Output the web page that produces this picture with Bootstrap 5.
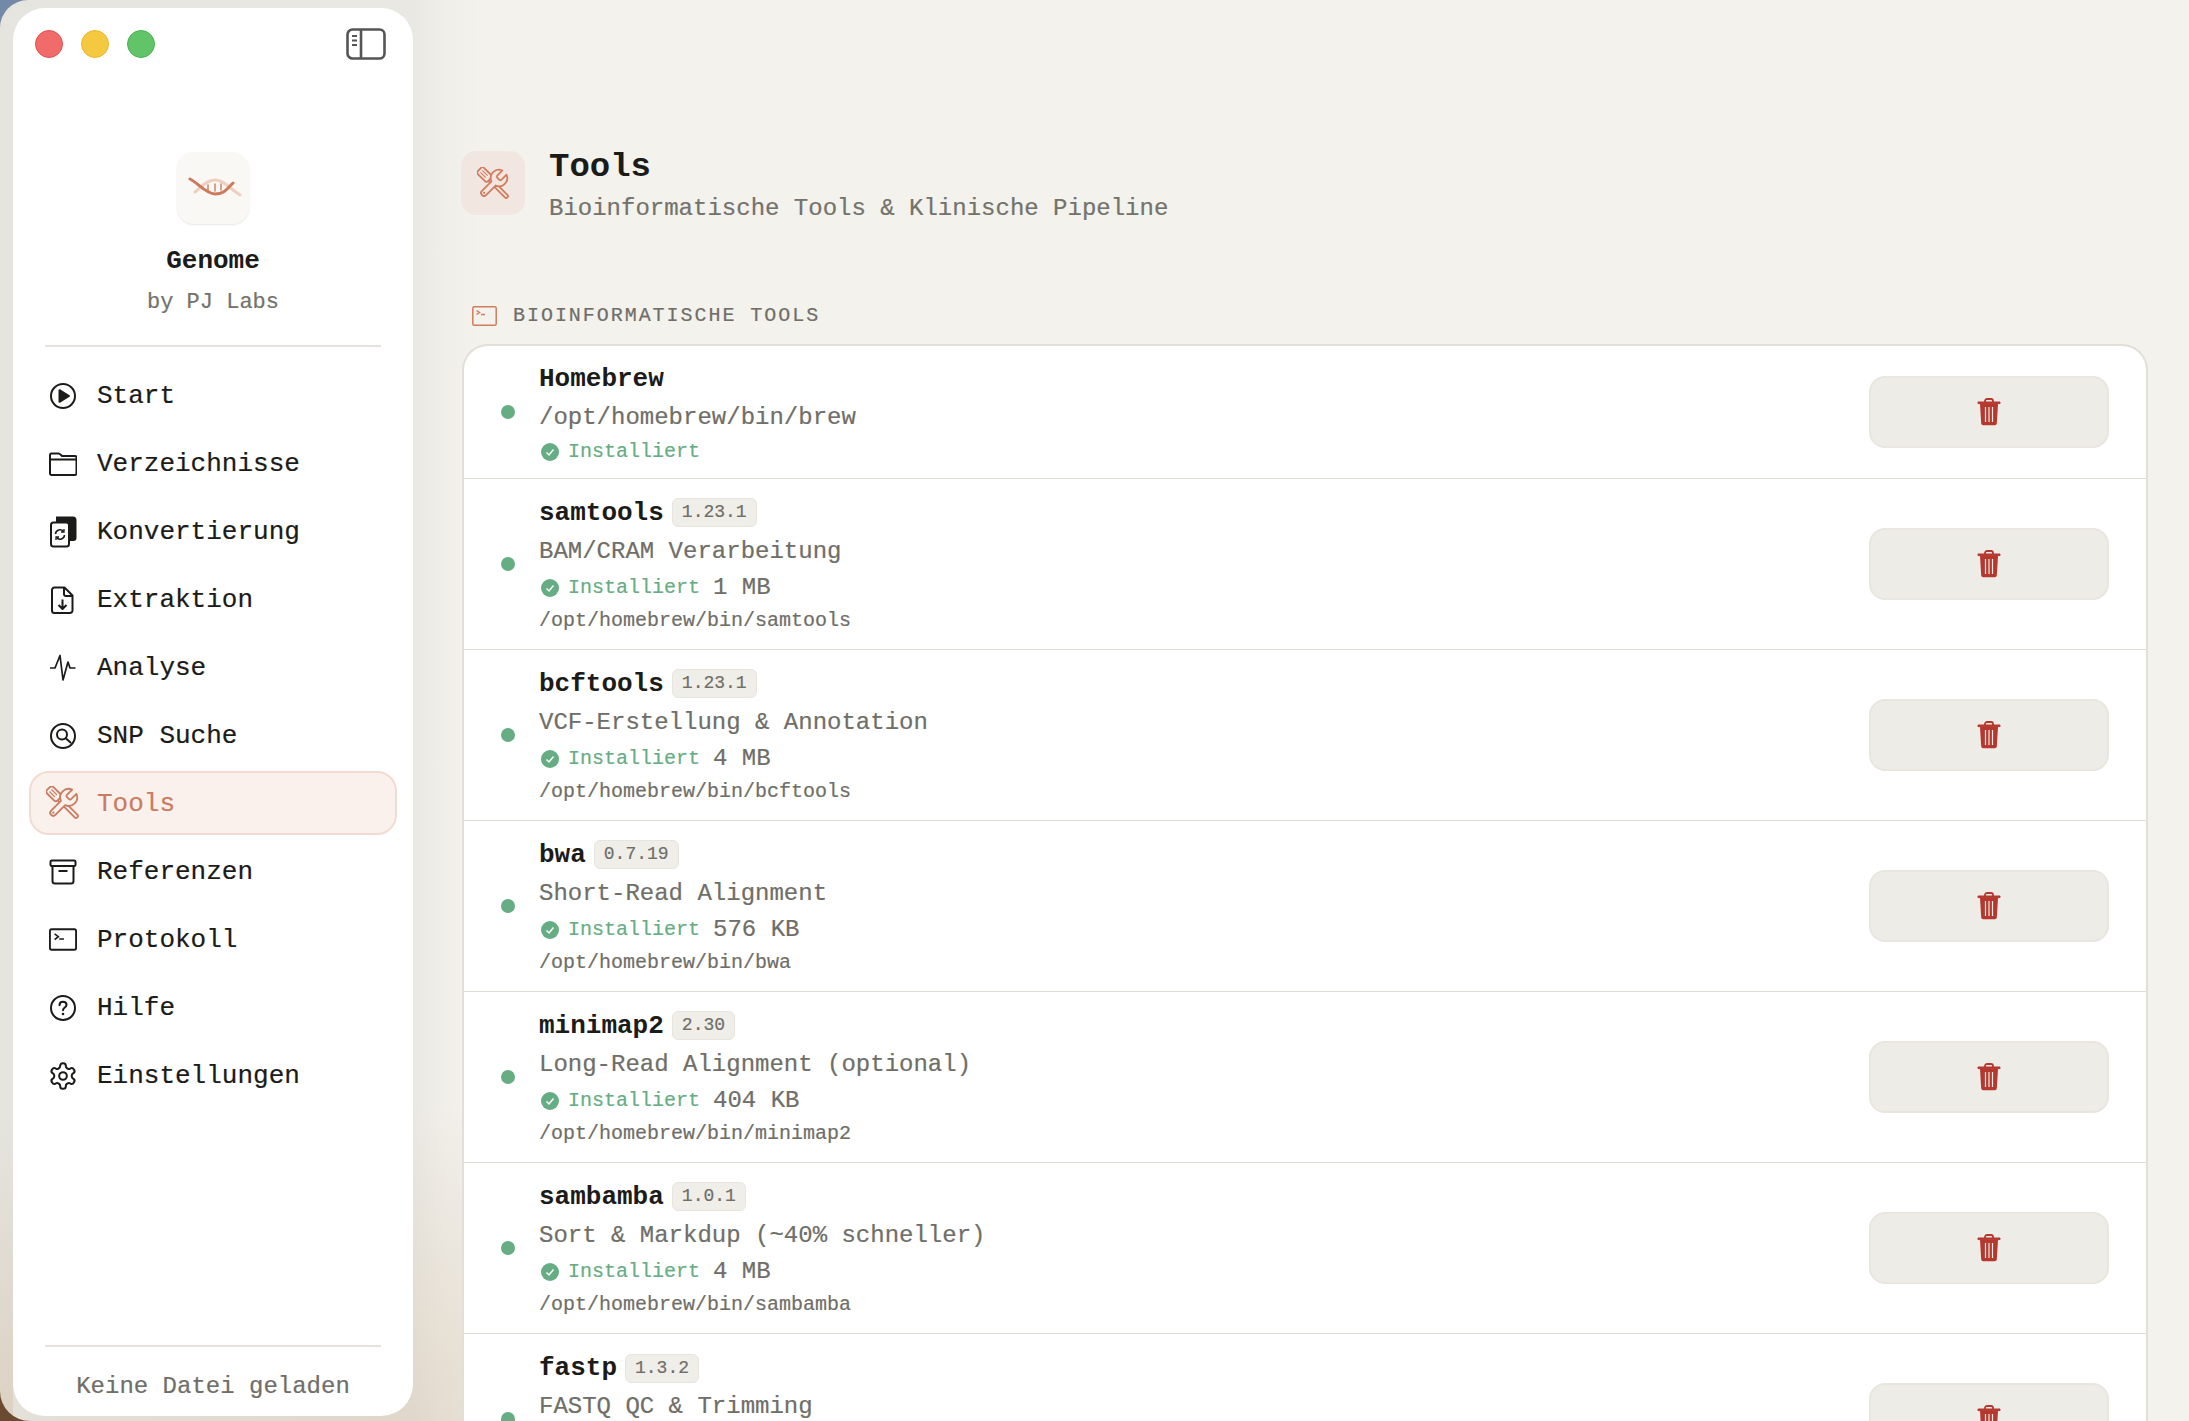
<!DOCTYPE html>
<html lang="de">
<head>
<meta charset="utf-8">
<title>Genome</title>
<link href="https://cdn.jsdelivr.net/npm/bootstrap@5.3.0/dist/css/bootstrap.min.css" rel="stylesheet">
<style>
html,body{height:1421px;overflow:hidden}
body{background:linear-gradient(180deg,#7488a8 0,#8a8f9c 50%,#6a4a30 92%);font-family:"Liberation Mono","DejaVu Sans Mono",monospace;color:#1b1b19;-webkit-text-stroke:.2px}
.win{height:1421px;border-radius:28px 0 0 30px;background:linear-gradient(0deg,rgba(214,198,176,.55),rgba(214,198,176,0) 22%) 0 0/13px 100% no-repeat,radial-gradient(ellipse 480px 320px at 380px 100%,rgba(214,198,176,.5),rgba(214,198,176,0)),linear-gradient(90deg,#e5e4df 0,#e9e8e3 413px,#f0eee9 440px,#f4f2ed 480px);padding:8px 0 5px 13px;overflow:hidden}
.side{width:400px;height:1408px;background:#fff;border-radius:32px;padding:0 16px}
.tlbar{height:72px;padding:0 11px 0 6px}
.lights{gap:18px}
.light{width:28px;height:28px;border-radius:50%;border:1px solid}
.lr{background:#f26b6b;border-color:#e34f4f}
.ly{background:#f4c93f;border-color:#eab82c}
.lg{background:#62c468;border-color:#4cb354}
.logobox{width:72px;height:72px;border-radius:17px;background:#faf8f5;box-shadow:0 1px 2px rgba(60,50,40,.12);margin-top:72px}
.brand{font-size:26px;font-weight:700;line-height:36px;margin-top:19px;-webkit-text-stroke:0}
.byline{font-size:22px;line-height:30px;color:#73726c;margin-top:9px}
.hr1{height:2px;background:#e4e2db;margin:27px 16px 16px}
.navi{height:64px;gap:20px;padding:2px 18px 0;border:2px solid transparent;border-radius:20px;font-size:26px;color:#1b1b19;margin-bottom:4px;text-decoration:none}
.navi svg{flex:none;width:28px;height:28px}
.navi svg.wide{width:34px;height:34px;margin:-2px -3px 0}
.navi svg.tall{height:32px}
.navi.cur{background:#faf1ed;border-color:#f1dbd2;color:#c97c60;--ic:#faf1ed}
.sidefoot{margin:0 16px;border-top:2px solid #e4e2db;padding:20px 0 9px;font-size:24px;line-height:40px;color:#6f6e68;text-align:center}
.mainp{padding:143px 41px 0 48px;min-width:0}
.hicon{width:64px;height:64px;border-radius:15px;background:#f2e7e0;color:#d27c5e;--ic:#f2e7e0}
.h-title{font-size:34px;line-height:40px;font-weight:600;margin-top:-4px;-webkit-text-stroke:0}
.h-sub{font-size:24px;line-height:36px;color:#73726c;margin-top:4px}
.seclabel{font-size:20px;letter-spacing:1.96px;line-height:28px;color:#6f6e68;gap:16px;margin:75px 0 14px 11px}
.toolcard{background:#fff;border:2px solid #e2dfd8;border-radius:26px 26px 0 0;border-bottom:0;margin-left:1px;width:1686px}
.trow{padding:14px 37px;border-bottom:1px solid #dfdcd5;height:171px;gap:16px}
.trow.first{height:133px;padding-top:13px;padding-bottom:13px}
.tblock{margin-top:2px}
.first .tblock{margin-top:4px}
.dot{width:14px;height:14px;border-radius:50%;background:#66ad84;flex:none;margin-right:8px}
.tname{font-size:26px;font-weight:700;line-height:36px;gap:8px;-webkit-text-stroke:0}
.vers{font-size:18px;font-weight:400;line-height:27px;padding:0 9px;background:#f0eee9;border:1px solid #e8e5df;border-radius:6px;color:#6f6e68;-webkit-text-stroke:.2px}
.tdesc{font-size:24px;line-height:36px;color:#6f6e68;margin-top:3px}
.tstat{font-size:24px;line-height:36px;color:#6f6e68;gap:13px;padding-left:1px}
.first .tstat{line-height:31px}
.ok{font-size:20px;color:#66ad84}
.ok svg{width:20px;height:20px}
.tpath{font-size:20px;line-height:30px;color:#6f6e68}
.delbtn,.delbtn:hover{width:240px;height:72px;flex:none;background:#eeece7;border:2px solid #e9e6e0;border-radius:16px;padding:0;color:#b5382f}
.delbtn svg{width:24px;height:28px}
.nobar{display:none}
</style>
</head>
<body>
<svg class="nobar">
  <symbol id="i-tools" viewBox="0 0 24 24">
    <g transform="rotate(-45 12 12)" fill="none" stroke="currentColor" stroke-width="1.300" stroke-linejoin="round">
      <rect x="8.800" y="-2.500" width="6.400" height="10.500" rx="1.800"/>
      <path d="M11 -.5v5.500M13 -.5v5.500" stroke-width=".8"/>
      <path d="M10.700 8v17a1.300 1.300 0 0 0 2.600 0V8"/>
    </g>
    <path d="M14.700 6.300a1 1 0 0 0 0 1.400l1.600 1.600a1 1 0 0 0 1.400 0l3.770-3.770a6 6 0 0 1-7.940 7.940l-6.910 6.910a2.120 2.120 0 0 1-3-3l6.910-6.910a6 6 0 0 1 7.940-7.940l-3.760 3.760z" fill="var(--ic,#fff)" stroke="currentColor" stroke-width="1.300" stroke-linejoin="round"/>
    <circle cx="5.200" cy="18.800" r=".8" fill="currentColor"/>
  </symbol>
  <symbol id="i-check" viewBox="0 0 20 20">
    <circle cx="10" cy="10" r="9" fill="#66ad84"/><path d="M6.500 10.500l2.500 2.500 4.500-5.500" fill="none" stroke="#fff" stroke-width="1.500"/>
  </symbol>
  <symbol id="i-trash" viewBox="0 0 24 28">
    <path d="M8 4V3a2 2 0 0 1 2-2h4a2 2 0 0 1 2 2v1" fill="none" stroke="currentColor" stroke-width="1.800"/>
    <path d="M1 4h22v1.600H1z" fill="currentColor" stroke="currentColor"/>
    <path d="M3 6h18l-1.200 19.500a2 2 0 0 1-2 1.800H6.200a2 2 0 0 1-2-1.800z" fill="currentColor"/>
    <path d="M8.500 9v15M12 9v15M15.500 9v15" stroke="#eeece7" stroke-width="1.200"/>
  </symbol>
</svg>
<div class="win d-flex">
<aside class="side d-flex flex-column flex-shrink-0">
  <div class="tlbar d-flex align-items-center justify-content-between">
    <div class="lights d-flex"><span class="light lr"></span><span class="light ly"></span><span class="light lg"></span></div>
    <svg width="40" height="32" viewBox="0 0 40 32" fill="none" stroke="#555" stroke-width="2.600"><rect x="1.500" y="1.500" width="37" height="29" rx="5"/><path d="M15 2v28"/><path d="M6 8h5M6 12.500h5M6 17h5" stroke-width="2"/></svg>
  </div>
  <div class="d-flex flex-column align-items-center">
    <div class="logobox d-flex align-items-center justify-content-center">
      <svg width="58" height="22" viewBox="0 0 58 22" fill="none" stroke-linecap="round">
        <path d="M11 15C17 10 23 3 31 3S44 10 56 18" stroke="#efcfbe" stroke-width="3"/>
        <path d="M6 2C14 6 22 17 31 17S43 12 49 6" stroke="#cb7b5c" stroke-width="3"/>
        <path d="M24 8v6M31 7v7M37 7v6" stroke="#cb7b5c" stroke-width="1.400"/>
      </svg>
    </div>
    <div class="brand">Genome</div>
    <div class="byline">by PJ Labs</div>
  </div>
  <div class="hr1"></div>
  <nav class="d-flex flex-column flex-grow-1">
    <a class="navi d-flex align-items-center" href="#"><svg viewBox="0 0 28 28" fill="none" stroke="currentColor" stroke-width="2"><circle cx="14" cy="14" r="12"/><path d="M10.500 8.200v11.600L20 14z" fill="currentColor" stroke-linejoin="round"/></svg>Start</a>
    <a class="navi d-flex align-items-center" href="#"><svg viewBox="0 0 28 28" fill="none" stroke="currentColor" stroke-width="2"><path d="M1 7.500V5a1.500 1.500 0 0 1 1.500-1.500h7c1 0 1.500.5 2.500 1.500l1 1H26a1.500 1.500 0 0 1 1.500 1.500v16A1.500 1.500 0 0 1 26 25H2.500A1.500 1.500 0 0 1 1 23.500zM1 9.500h26.500"/></svg>Verzeichnisse</a>
    <a class="navi d-flex align-items-center" href="#"><svg class="tall" viewBox="0 0 28 32" fill="none" stroke="currentColor" stroke-width="2"><path d="M8 1.500h16a2.500 2.500 0 0 1 2.500 2.500v18a2 2 0 0 1-2 2H21V8.500a3 3 0 0 0-3-3H8z" fill="currentColor"/><rect x="2" y="6.500" width="18" height="24" rx="2.500" fill="#fff"/><path d="M6.500 18a4.500 4.500 0 0 1 8-2.500M15.500 19a4.500 4.500 0 0 1-8 2.500" stroke-width="1.600"/><path d="M15 13v3h-3M7 24v-3h3" stroke-width="1.300"/></svg>Konvertierung</a>
    <a class="navi d-flex align-items-center" href="#"><svg viewBox="0 0 28 28" fill="none" stroke="currentColor" stroke-width="2" stroke-linejoin="round"><path d="M5.500 1.500h10l8 8v15a2.500 2.500 0 0 1-2.500 2.500H5.500A2.500 2.500 0 0 1 3 24.500V4a2.500 2.500 0 0 1 2.500-2.500zM15 1.500V8a2 2 0 0 0 2 2h6.500M13.500 13.500V23M9.500 19l4 4 4-4"/></svg>Extraktion</a>
    <a class="navi d-flex align-items-center" href="#"><svg viewBox="0 0 28 28" fill="none" stroke="currentColor" stroke-width="1.700" stroke-linejoin="round"><path d="M1 14h5L11 1.500 14 26l5-18 2 6h5.500"/></svg>Analyse</a>
    <a class="navi d-flex align-items-center" href="#"><svg viewBox="0 0 28 28" fill="none" stroke="currentColor" stroke-width="2"><circle cx="14" cy="14" r="12"/><circle cx="13" cy="12.500" r="5"/><path d="M17 16.500l4.500 4" stroke-linecap="round"/></svg>SNP Suche</a>
    <a class="navi cur d-flex align-items-center" href="#"><svg class="wide"><use href="#i-tools"/></svg>Tools</a>
    <a class="navi d-flex align-items-center" href="#"><svg viewBox="0 0 28 28" fill="none" stroke="currentColor" stroke-width="2"><rect x="1.500" y="2.500" width="25" height="5.500" rx="1.200"/><path d="M3.500 8v15a2.500 2.500 0 0 0 2.500 2.500h16a2.500 2.500 0 0 0 2.500-2.500V8M9.500 13h9"/></svg>Referenzen</a>
    <a class="navi d-flex align-items-center" href="#"><svg viewBox="0 0 30 28" fill="none" stroke="currentColor" stroke-width="2"><rect x="1" y="2.500" width="28" height="22" rx="1.800"/><path d="M6 7.500l4 3-4 3M11 13h5" stroke-width="1.700"/></svg>Protokoll</a>
    <a class="navi d-flex align-items-center" href="#"><svg viewBox="0 0 28 28" fill="none" stroke="currentColor" stroke-width="2"><circle cx="14" cy="14" r="12"/><path d="M10.500 11.200c0-2 1.500-3.400 3.500-3.400s3.500 1.300 3.500 3.100c0 2.600-3.500 2.700-3.500 5.400" stroke-linecap="round"/><circle cx="14" cy="20" r="1.300" fill="currentColor" stroke="none"/></svg>Hilfe</a>
    <a class="navi d-flex align-items-center" href="#"><svg viewBox="1 1 22 22" fill="none" stroke="currentColor" stroke-width="1.600" stroke-linejoin="round"><path d="M12.220 2h-.44a2 2 0 0 0-2 2v.18a2 2 0 0 1-1 1.730l-.43.25a2 2 0 0 1-2 0l-.15-.08a2 2 0 0 0-2.730.73l-.22.38a2 2 0 0 0 .73 2.730l.15.1a2 2 0 0 1 1 1.720v.51a2 2 0 0 1-1 1.740l-.15.09a2 2 0 0 0-.73 2.730l.22.38a2 2 0 0 0 2.730.73l.15-.08a2 2 0 0 1 2 0l.43.25a2 2 0 0 1 1 1.730V20a2 2 0 0 0 2 2h.44a2 2 0 0 0 2-2v-.18a2 2 0 0 1 1-1.730l.43-.25a2 2 0 0 1 2 0l.15.08a2 2 0 0 0 2.730-.73l.22-.39a2 2 0 0 0-.73-2.730l-.15-.08a2 2 0 0 1-1-1.740v-.5a2 2 0 0 1 1-1.740l.15-.09a2 2 0 0 0 .73-2.730l-.22-.38a2 2 0 0 0-2.730-.73l-.15.08a2 2 0 0 1-2 0l-.43-.25a2 2 0 0 1-1-1.730V4a2 2 0 0 0-2-2z"/><circle cx="12" cy="12" r="3"/></svg>Einstellungen</a>
  </nav>
  <div class="sidefoot">Keine Datei geladen</div>
</aside>
<main class="mainp flex-grow-1">
  <header class="d-flex gap-4">
    <div class="hicon d-flex align-items-center justify-content-center flex-shrink-0"><svg width="33" height="33"><use href="#i-tools"/></svg></div>
    <div>
      <div class="h-title">Tools</div>
      <div class="h-sub">Bioinformatische Tools &amp; Klinische Pipeline</div>
    </div>
  </header>
  <div class="seclabel d-flex align-items-center"><svg width="25" height="20" viewBox="0 0 25 20" fill="none" stroke="#d27c5e" stroke-width="1.500"><rect x=".8" y=".8" width="23.400" height="18.400" rx="1.500"/><path d="M4.500 4.500l3 2-3 2M9 8.500h4"/></svg>BIOINFORMATISCHE TOOLS</div>
  <section class="toolcard">
    <div class="trow first d-flex align-items-center">
      <span class="dot"></span>
      <div class="tblock flex-grow-1">
        <div class="tname d-flex align-items-center">Homebrew</div>
        <div class="tdesc">/opt/homebrew/bin/brew</div>
        <div class="tstat d-flex align-items-center"><span class="ok d-flex align-items-center gap-2"><svg><use href="#i-check"/></svg>Installiert</span></div>
      </div>
      <button class="btn delbtn d-flex align-items-center justify-content-center" aria-label="Löschen"><svg><use href="#i-trash"/></svg></button>
    </div>
    <div class="trow d-flex align-items-center">
      <span class="dot"></span>
      <div class="tblock flex-grow-1">
        <div class="tname d-flex align-items-center">samtools<span class="vers">1.23.1</span></div>
        <div class="tdesc">BAM/CRAM Verarbeitung</div>
        <div class="tstat d-flex align-items-center"><span class="ok d-flex align-items-center gap-2"><svg><use href="#i-check"/></svg>Installiert</span>1 MB</div>
        <div class="tpath">/opt/homebrew/bin/samtools</div>
      </div>
      <button class="btn delbtn d-flex align-items-center justify-content-center" aria-label="Löschen"><svg><use href="#i-trash"/></svg></button>
    </div>
    <div class="trow d-flex align-items-center">
      <span class="dot"></span>
      <div class="tblock flex-grow-1">
        <div class="tname d-flex align-items-center">bcftools<span class="vers">1.23.1</span></div>
        <div class="tdesc">VCF-Erstellung &amp; Annotation</div>
        <div class="tstat d-flex align-items-center"><span class="ok d-flex align-items-center gap-2"><svg><use href="#i-check"/></svg>Installiert</span>4 MB</div>
        <div class="tpath">/opt/homebrew/bin/bcftools</div>
      </div>
      <button class="btn delbtn d-flex align-items-center justify-content-center" aria-label="Löschen"><svg><use href="#i-trash"/></svg></button>
    </div>
    <div class="trow d-flex align-items-center">
      <span class="dot"></span>
      <div class="tblock flex-grow-1">
        <div class="tname d-flex align-items-center">bwa<span class="vers">0.7.19</span></div>
        <div class="tdesc">Short-Read Alignment</div>
        <div class="tstat d-flex align-items-center"><span class="ok d-flex align-items-center gap-2"><svg><use href="#i-check"/></svg>Installiert</span>576 KB</div>
        <div class="tpath">/opt/homebrew/bin/bwa</div>
      </div>
      <button class="btn delbtn d-flex align-items-center justify-content-center" aria-label="Löschen"><svg><use href="#i-trash"/></svg></button>
    </div>
    <div class="trow d-flex align-items-center">
      <span class="dot"></span>
      <div class="tblock flex-grow-1">
        <div class="tname d-flex align-items-center">minimap2<span class="vers">2.30</span></div>
        <div class="tdesc">Long-Read Alignment (optional)</div>
        <div class="tstat d-flex align-items-center"><span class="ok d-flex align-items-center gap-2"><svg><use href="#i-check"/></svg>Installiert</span>404 KB</div>
        <div class="tpath">/opt/homebrew/bin/minimap2</div>
      </div>
      <button class="btn delbtn d-flex align-items-center justify-content-center" aria-label="Löschen"><svg><use href="#i-trash"/></svg></button>
    </div>
    <div class="trow d-flex align-items-center">
      <span class="dot"></span>
      <div class="tblock flex-grow-1">
        <div class="tname d-flex align-items-center">sambamba<span class="vers">1.0.1</span></div>
        <div class="tdesc">Sort &amp; Markdup (~40% schneller)</div>
        <div class="tstat d-flex align-items-center"><span class="ok d-flex align-items-center gap-2"><svg><use href="#i-check"/></svg>Installiert</span>4 MB</div>
        <div class="tpath">/opt/homebrew/bin/sambamba</div>
      </div>
      <button class="btn delbtn d-flex align-items-center justify-content-center" aria-label="Löschen"><svg><use href="#i-trash"/></svg></button>
    </div>
    <div class="trow d-flex align-items-center">
      <span class="dot"></span>
      <div class="tblock flex-grow-1 align-self-start">
        <div class="tname d-flex align-items-center">fastp<span class="vers">1.3.2</span></div>
        <div class="tdesc">FASTQ QC &amp; Trimming</div>
      </div>
      <button class="btn delbtn d-flex align-items-center justify-content-center" aria-label="Löschen"><svg><use href="#i-trash"/></svg></button>
    </div>
  </section>
</main>
</div>
<script src="https://cdn.jsdelivr.net/npm/bootstrap@5.3.0/dist/js/bootstrap.bundle.min.js"></script>
</body>
</html>
